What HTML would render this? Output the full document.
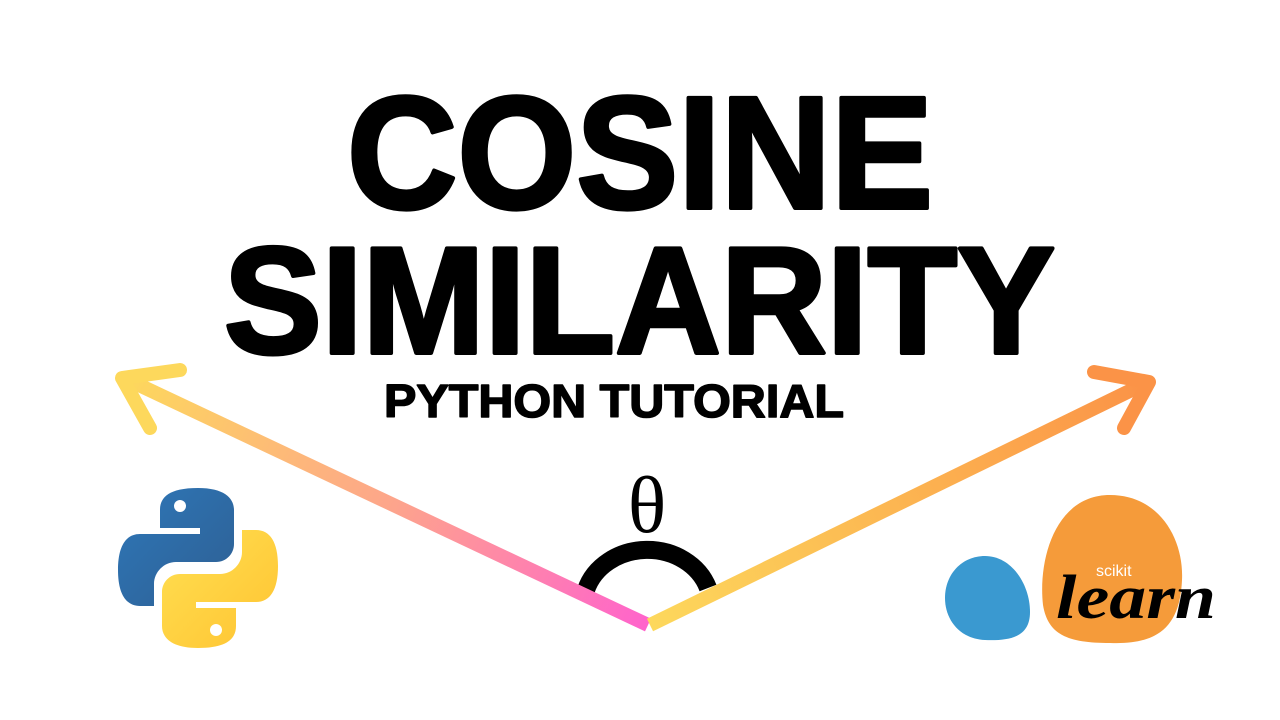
<!DOCTYPE html>
<html><head><style>
html,body{margin:0;padding:0;background:#fff;width:1280px;height:720px;overflow:hidden}
</style></head><body>
<svg width="1280" height="720" viewBox="0 0 1280 720" xmlns="http://www.w3.org/2000/svg">
<defs>
<linearGradient id="gl" gradientUnits="userSpaceOnUse" x1="648" y1="625" x2="125" y2="378">
<stop offset="0" stop-color="#ff63cc"/><stop offset="0.5" stop-color="#fda68a"/><stop offset="1" stop-color="#fdd85c"/></linearGradient>
<linearGradient id="gr" gradientUnits="userSpaceOnUse" x1="650" y1="625" x2="1145" y2="385">
<stop offset="0" stop-color="#fdd85c"/><stop offset="1" stop-color="#fb9347"/></linearGradient>
<linearGradient id="pb" x1="0" y1="0" x2="1" y2="1"><stop offset="0" stop-color="#2f77b8"/><stop offset="1" stop-color="#2d5f93"/></linearGradient>
<linearGradient id="py" x1="0" y1="0" x2="1" y2="1"><stop offset="0" stop-color="#ffe052"/><stop offset="1" stop-color="#ffc331"/></linearGradient>
</defs>
<g font-family="Liberation Sans, sans-serif" font-weight="bold" fill="#000" stroke="#000" stroke-linejoin="round">
<text x="347" y="208" font-size="160" stroke-width="4" textLength="586" lengthAdjust="spacingAndGlyphs">COSINE</text>
<text x="224" y="353" font-size="152" stroke-width="4" textLength="831" lengthAdjust="spacingAndGlyphs">SIMILARITY</text>
<text x="384" y="417" font-size="46" stroke-width="1.5" textLength="460" lengthAdjust="spacingAndGlyphs">PYTHON TUTORIAL</text>
</g>
<text x="647" y="532" font-family="Liberation Serif, serif" font-size="80" text-anchor="middle">θ</text>
<path d="M586 590 A64 56 0 0 1 708 588" fill="none" stroke="#000" stroke-width="18"/>
<line x1="648" y1="625" x2="124" y2="378" stroke="url(#gl)" stroke-width="14"/>
<path d="M180 370 L122 378 L150 428" fill="none" stroke="#fdd85c" stroke-width="14" stroke-linecap="round" stroke-linejoin="round"/>
<line x1="650" y1="625" x2="1148" y2="382" stroke="url(#gr)" stroke-width="14"/>
<path d="M1094 372 L1149 382 L1124 428" fill="none" stroke="#fb9347" stroke-width="14" stroke-linecap="round" stroke-linejoin="round"/>
<g transform="translate(118,488)">
<path d="M80 0 C50 0 42 10 42 22 V40 H82 V46 H22 C8 46 0 58 0 82 C0 106 8 118 22 118 H36 V96 C36 84 46 74 58 74 H98 C108 74 116 66 116 56 V22 C116 10 106 0 80 0 Z" fill="url(#pb)"/>
<circle cx="62" cy="18" r="6" fill="#fff"/>
<path d="M80 160 C110 160 118 150 118 138 V120 H78 V114 H138 C152 114 160 102 160 78 C160 54 152 42 138 42 H124 V64 C124 76 114 86 102 86 H62 C52 86 44 94 44 104 V138 C44 150 54 160 80 160 Z" fill="url(#py)"/>
<circle cx="98" cy="142" r="6" fill="#fff"/>
</g>
<path d="M985 556 C1012 556 1030 585 1030 612 C1030 636 1012 641 985 640 C960 639 945 620 945 598 C945 574 962 556 985 556 Z" fill="#3a99d0"/>
<path d="M1110 495 C1160 495 1184 540 1182 580 C1180 625 1160 645 1110 643 C1068 643 1048 635 1043 605 C1038 560 1055 495 1110 495 Z" fill="#f59b3a"/>
<text x="1096" y="576" font-family="Liberation Sans, sans-serif" font-size="16" fill="#fff">scikit</text>
<text x="1056" y="618" font-family="Liberation Serif, serif" font-style="italic" font-weight="bold" font-size="62" textLength="160" lengthAdjust="spacingAndGlyphs" fill="#000">learn</text>
</svg>
</body></html>
